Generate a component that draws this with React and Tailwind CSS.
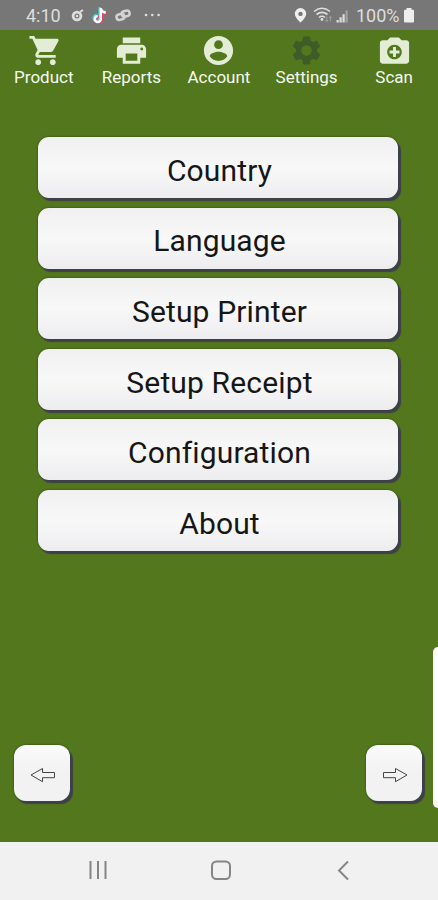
import React from "react";

const NAV = [
  { label: "Product", shift: true, paths: ["M7 18c-1.1 0-1.99.9-1.99 2S5.9 22 7 22s2-.9 2-2-.9-2-2-2zM1 2v2h2l3.6 7.59-1.35 2.45c-.16.28-.25.61-.25.96 0 1.1.9 2 2 2h12v-2H7.42c-.14 0-.25-.11-.25-.25l.03-.12.9-1.63h7.45c.75 0 1.41-.41 1.75-1.03l3.58-6.49c.08-.14.12-.31.12-.48 0-.55-.45-1-1-1H5.21l-.94-2H1zm16 16c-1.1 0-1.99.9-1.99 2s.89 2 1.99 2 2-.9 2-2-.9-2-2-2z"] },
  { label: "Reports", paths: ["M19 8H5c-1.66 0-3 1.34-3 3v6h4v4h12v-4h4v-6c0-1.66-1.34-3-3-3zm-3 11H8v-5h8v5zm3-7c-.55 0-1-.45-1-1s.45-1 1-1 1 .45 1 1-.45 1-1 1zm-1-9H6v4h12V3z"] },
  { label: "Account", paths: ["M12 2C6.48 2 2 6.48 2 12s4.48 10 10 10 10-4.48 10-10S17.52 2 12 2zm0 3c1.66 0 3 1.34 3 3s-1.34 3-3 3-3-1.34-3-3 1.34-3 3-3zm0 14.2c-2.5 0-4.71-1.28-6-3.22.03-1.99 4-3.08 6-3.08 1.99 0 5.97 1.09 6 3.08-1.29 1.94-3.5 3.22-6 3.22z"] },
  { label: "Settings", dark: true, paths: ["M19.14 12.94c.04-.3.06-.61.06-.94 0-.32-.02-.64-.07-.94l2.03-1.58c.18-.14.23-.41.12-.61l-1.92-3.32c-.12-.22-.37-.29-.59-.22l-2.39.96c-.5-.38-1.03-.7-1.62-.94l-.36-2.54c-.04-.24-.24-.41-.48-.41h-3.84c-.24 0-.43.17-.47.41l-.36 2.54c-.59.24-1.13.57-1.62.94l-2.39-.96c-.22-.08-.47 0-.59.22L2.74 8.87c-.12.21-.08.47.12.61l2.03 1.58c-.05.3-.09.63-.09.94s.02.64.07.94l-2.03 1.58c-.18.14-.23.41-.12.61l1.92 3.32c.12.22.37.29.59.22l2.39-.96c.5.38 1.03.7 1.62.94l.36 2.54c.05.24.24.41.48.41h3.84c.24 0 .44-.17.47-.41l.36-2.54c.59-.24 1.13-.56 1.62-.94l2.39.96c.22.08.47 0 .59-.22l1.92-3.32c.12-.22.07-.47-.12-.61l-2.01-1.58zM12 15.6c-1.98 0-3.6-1.62-3.6-3.6s1.62-3.6 3.6-3.6 3.6 1.62 3.6 3.6-1.62 3.6-3.6 3.6z"] },
  { label: "Scan", paths: ["M9 3L7.17 5H4c-1.1 0-2 .9-2 2v12c0 1.1.9 2 2 2h16c1.1 0 2-.9 2-2V7c0-1.1-.9-2-2-2h-3.17L15 3H9zm3 15c-2.76 0-5-2.24-5-5s2.24-5 5-5 5 2.24 5 5-2.24 5-5 5z", "M11 9.600h2V12h2.400v2H13v2.400h-2V14H8.600v-2H11z"] },
];

const ITEMS = ["Country", "Language", "Setup Printer", "Setup Receipt", "Configuration", "About"];

function StatusBar() {
  return (
    <div className="flex h-[30px] shrink-0 items-center bg-[#777777] text-[#dedede]">
      <span className="ml-[26px] w-[44px] pt-px text-[18px] leading-[30px]">4:10</span>
      <svg className="h-[30px] w-[92px]" viewBox="70 0 92 30" fill="none">
        <circle cx="77" cy="16" r="3.9" stroke="#dedede" strokeWidth="2.8" />
        <circle cx="77" cy="16" r="1.3" fill="#dedede" />
        <path d="M80 12l3-2" stroke="#dedede" strokeWidth="2" />
        <g strokeWidth="2.5">
          <path d="M100 8v11a3 3 0 1 1-3-3M100 8.500q1 4 5 4" stroke="#35d9d2" transform="translate(-.4 -.9)" />
          <path d="M100 8v11a3 3 0 1 1-3-3M100 8.500q1 4 5 4" stroke="#ee3d68" transform="translate(1.800 .8)" />
          <path d="M100 8v11a3 3 0 1 1-3-3M100 8.500q1 4 5 4" stroke="#fff" transform="translate(.8 0)" />
        </g>
        <g stroke="#d3d3d3" strokeWidth="2.500" strokeLinecap="round">
          <rect x="116.500" y="14" width="8" height="5.500" rx="2.750" transform="rotate(-15 121 17)" />
          <rect x="121.500" y="10.800" width="8" height="5.500" rx="2.750" transform="rotate(-15 126 13)" />
        </g>
        <g fill="#dedede">
          <circle cx="146" cy="15" r="1.300" /><circle cx="152.300" cy="15" r="1.300" /><circle cx="158.600" cy="15" r="1.300" />
        </g>
      </svg>
      <svg className="ml-auto h-[30px] w-[62px]" viewBox="294 0 62 30" fill="none">
        <path fillRule="evenodd" d="M300.500 8a5.700 5.700 0 0 0-5.700 5.700c0 4 5.700 8.800 5.700 8.800s5.700-4.800 5.700-8.800a5.700 5.700 0 0 0-5.700-5.700zm0 3.700a2.200 2.200 0 1 1 0 4.400 2.200 2.200 0 0 1 0-4.400z" fill="#eeeeee" />
        <g stroke="#dedede" strokeWidth="1.600">
          <path d="M314 11.500q8-6.500 16 0M316.500 14.500q5.500-4.300 11 0M319 17.500q3-2.500 6 0" />
        </g>
        <circle cx="322" cy="19.500" r="1.400" fill="#dedede" />
        <path d="M326.800 16.500v5m-1.200-1.500 1.200 1.500 1.200-1.500M330.300 21.500v-5m-1.200 1.500 1.200-1.500 1.200 1.500" stroke="#aaa" strokeWidth=".8" />
        <g fill="#dedede">
          <path d="M336.500 20h2.200v2.500h-2.200zM339.500 17.200h2.200v5.300h-2.200zM342.500 14.200h2.200v8.300h-2.200z" />
          <path d="M345.500 10.500h2.200v12h-2.200z" fill="#a3a3a3" />
        </g>
      </svg>
      <span className="w-[47px] whitespace-nowrap pt-px text-[18px] leading-[30px]">100%</span>
      <svg className="mr-[23px] h-[30px] w-[12px]" viewBox="402 0 12 30">
        <path d="M405.500 8h5v1.800h1.500a1 1 0 0 1 1 1V21.500a1 1 0 0 1-1 1h-8a1 1 0 0 1-1-1V10.800a1 1 0 0 1 1-1h1.500z" fill="#eeeeee" />
      </svg>
    </div>
  );
}

function ArrowButton({ flip }) {
  return (
    <button className="flex h-[56px] w-[56px] items-center justify-center rounded-[12px] bg-linear-to-b from-[#fafafa] via-[#f2f2f2] to-[#f2f2f4] shadow-[2.5px_3px_1px_#3d4048,0_0_2px_#263b08]">
      <svg className={flip ? "ml-[2px] mt-[3px] h-[16px] w-[26px] -scale-x-100" : "ml-[2px] mt-[3px] h-[16px] w-[26px]"} viewBox="0 0 26 16" fill="none" stroke="#444" strokeWidth="1">
        <path d="M1 8 12.500 1.500V5.500H24.500V10.700H12.500V14.700Z" />
      </svg>
    </button>
  );
}

export default function App() {
  return (
    <div className="relative flex h-[900px] w-[438px] flex-col overflow-hidden bg-[#52771d] font-['Roboto',sans-serif]">
      <StatusBar />
      <nav className="grid h-[64px] shrink-0 grid-cols-5 pt-[3px]">
        {NAV.map((n) => (
          <div key={n.label} className="flex flex-col items-center">
            <svg className={n.dark ? "h-[35px] w-[35px] fill-[#3d5c27]" : n.shift ? "ml-[3px] h-[35px] w-[35px] fill-[#e3edd6]" : "h-[35px] w-[35px] fill-[#e3edd6]"} viewBox="0 0 24 24">
              {n.paths.map((d) => <path key={d} d={d} />)}
            </svg>
            <span className="-mt-px text-[17px] leading-[20px] text-[#f6faef]">{n.label}</span>
          </div>
        ))}
      </nav>
      <main className="flex flex-col gap-[9.600px] pl-[38px] pt-[43px]">
        {ITEMS.map((t) => (
          <button key={t} className="h-[61px] w-[360px] rounded-[11px] bg-linear-to-b from-[#f0f0f0] via-[#f8f8f8] to-[#ededf0] pl-[3px] pt-[6.500px] text-[30px] leading-[36px] tracking-[0.15px] text-[#161616] shadow-[2.5px_3px_1px_#3d4048,0_0_2px_#263b08]">
            {t}
          </button>
        ))}
      </main>
      <div className="mb-[41px] mt-auto flex justify-between pl-[14px] pr-[16px]">
        <ArrowButton />
        <ArrowButton flip />
      </div>
      <div className="absolute right-0 top-[647px] h-[161px] w-[5px] rounded-l-[5px] bg-white" />
      <footer className="flex h-[58px] shrink-0 items-center bg-[#f1f1f1]">
        <svg className="h-[58px] w-[438px]" viewBox="0 0 438 58" fill="none" stroke="#858585" strokeWidth="2">
          <path d="M90.500 19v18M98 19v18M105.500 19v18" />
          <rect x="212" y="19.500" width="18" height="17.500" rx="4.500" />
          <path d="M348 19.500 339 28.500 348 37.500" />
        </svg>
      </footer>
    </div>
  );
}
